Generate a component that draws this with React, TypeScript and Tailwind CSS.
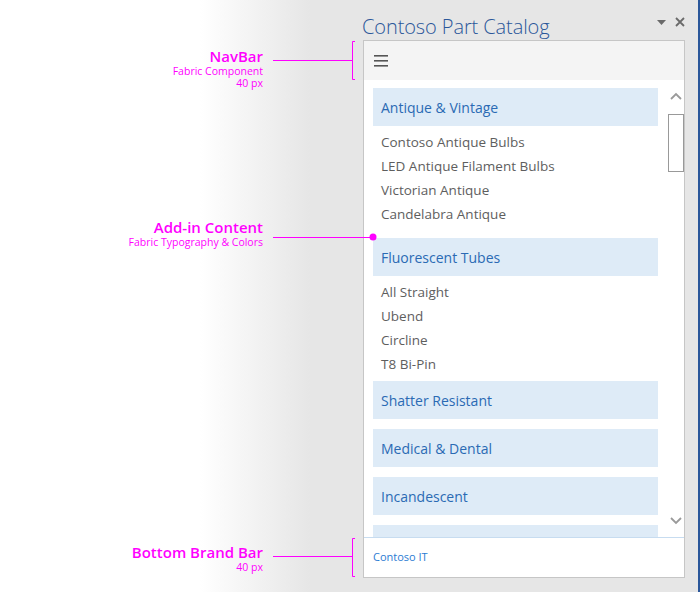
type Section = { title: string; items: string[]; space: string };

const sections: Section[] = [
  {
    title: 'Antique & Vintage',
    items: ['Contoso Antique Bulbs', 'LED Antique Filament Bulbs', 'Victorian Antique', 'Candelabra Antique'],
    space: 'mb-3',
  },
  {
    title: 'Fluorescent Tubes',
    items: ['All Straight', 'Ubend', 'Circline', 'T8 Bi-Pin'],
    space: 'mb-[5px]',
  },
  { title: 'Shatter Resistant', items: [], space: 'mb-[10px]' },
  { title: 'Medical & Dental', items: [], space: 'mb-[10px]' },
  { title: 'Incandescent', items: [], space: 'mb-[10px]' },
  // scrolled out of view, only the top of the block shows
  { title: '', items: [], space: 'mb-[10px]' },
];

function Annotation({ title, lines, className }: { title: string; lines: string[]; className: string }) {
  return (
    <div className={`absolute right-[437px] flex flex-col items-end text-[#ff00ff] ${className}`}>
      <div className="text-[15px] font-semibold leading-[18px]">{title}</div>
      {lines.map((l) => (
        <div key={l} className="text-[10.5px] leading-[12px]">
          {l}
        </div>
      ))}
    </div>
  );
}

export default function App() {
  return (
    <div className="relative w-[700px] h-[592px] overflow-hidden bg-[linear-gradient(to_right,#ffffff_200px,#e6e6e6_310px)] font-['Open_Sans',sans-serif]">
      <div className="absolute right-0 top-0 bottom-0 w-[2px] bg-[#2b579a]" />

      <div className="flex flex-col pl-[363px] pr-[15px]">
        {/* task pane title */}
        <div className="flex h-[40px] items-center justify-between pt-[13px]">
          <span className="-ml-px text-[20px] font-light tracking-[-0.1px] text-[#2b579a]">Contoso Part Catalog</span>
          <div className="flex items-center gap-[9px] pb-[9px] text-[#6a6a6a]">
            <svg width="9" height="5" viewBox="0 0 9 5">
              <path d="M0 0h9L4.5 5z" fill="currentColor" />
            </svg>
            <svg width="10" height="10" viewBox="0 0 10 10">
              <path d="M1 1l8 8M9 1l-8 8" stroke="currentColor" strokeWidth="1.8" />
            </svg>
          </div>
        </div>

        {/* pane */}
        <div className="flex flex-col border border-[#c6c6c6] bg-white">
          <div className="flex h-[39px] items-center bg-[#f4f4f4] pl-[10px]">
            <svg width="14" height="12" viewBox="0 0 14 12" className="mt-[1px]">
              <g fill="#555">
                <rect x="0" y="0" width="14" height="1.6" />
                <rect x="0" y="5" width="14" height="1.6" />
                <rect x="0" y="10" width="14" height="1.6" />
              </g>
            </svg>
          </div>

          <div className="flex h-[457px] overflow-hidden">
            <div className="w-[294px] shrink-0 pl-[9px] pt-[8px]">
              {sections.map((s, i) => (
                <div key={i} className={s.space}>
                  <div className="flex h-[38px] items-center bg-[#deebf7] pl-[8px] text-[14px] text-[#2a6ab4]">
                    {s.title}
                  </div>
                  {s.items.length > 0 && (
                    <ul className="pt-[4px]">
                      {s.items.map((it) => (
                        <li key={it} className="h-[24px] pl-[8px] text-[13.5px] leading-[24px] text-[#5e5e5e]">
                          {it}
                        </li>
                      ))}
                    </ul>
                  )}
                </div>
              ))}
            </div>

            {/* scrollbar */}
            <div className="ml-[10px] flex w-[16px] flex-col items-center text-[#9a9a9a]">
              <svg className="mt-[12px]" width="12" height="8" viewBox="0 0 12 8">
                <path d="M1 7l5-5 5 5" fill="none" stroke="currentColor" strokeWidth="1.8" />
              </svg>
              <div className="mt-[14px] h-[58px] w-[16px] border border-[#999] bg-white" />
              <div className="flex-1" />
              <svg className="mb-[12px]" width="12" height="8" viewBox="0 0 12 8">
                <path d="M1 1l5 5 5-5" fill="none" stroke="currentColor" strokeWidth="1.8" />
              </svg>
            </div>
          </div>

          <div className="flex h-[40px] items-center border-t border-[#c7dcf0] pl-[9px] text-[11px] text-[#2b7cd3]">
            Contoso IT
          </div>
        </div>
      </div>

      {/* annotations */}
      <Annotation title="NavBar" lines={['Fabric Component', '40 px']} className="top-[47px]" />
      <Annotation title="Add-in Content" lines={['Fabric Typography & Colors']} className="top-[218px]" />
      <Annotation title="Bottom Brand Bar" lines={['40 px']} className="top-[543px]" />

      <svg className="pointer-events-none absolute left-0 top-0" width="700" height="592">
        <g stroke="#ff00ff" strokeWidth="1" fill="none">
          <path d="M273 60.5H352.5M355 41.5H352.5V79.5H355" />
          <path d="M273 237.5H373" />
          <path d="M273 556.5H352.5M355 538.5H352.5V576.5H355" />
        </g>
        <circle cx="373" cy="237" r="3.5" fill="#ff00ff" />
      </svg>
    </div>
  );
}
